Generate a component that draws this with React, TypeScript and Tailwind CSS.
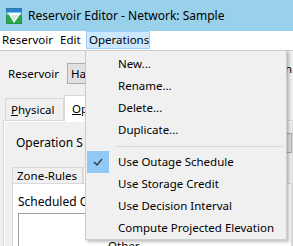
import React from "react";

function AppIcon() {
  return (
    <svg width="16" height="16" viewBox="0 0 16 16">
      <rect x="0" y="0" width="16" height="16" fill="#2aa84a" />
      <rect x="0" y="0" width="16" height="4" fill="#2f7fd8" />
      <rect x="0" y="4" width="16" height="3" fill="#6fc7e6" />
      <polygon points="2,5 15,5 8,15" fill="#ffffff" />
      <polygon points="5,7 12,7 8,13" fill="#cfe9d4" />
      <rect x="0" y="0" width="16" height="16" fill="none" stroke="#1d6b34" strokeWidth="0.6" />
    </svg>
  );
}

type Item = { label: string; checked?: boolean };

const groupA: Item[] = [
  { label: "New..." },
  { label: "Rename..." },
  { label: "Delete..." },
  { label: "Duplicate..." },
];
const groupB: Item[] = [
  { label: "Use Outage Schedule", checked: true },
  { label: "Use Storage Credit" },
  { label: "Use Decision Interval" },
  { label: "Compute Projected Elevation" },
];

function MenuRow({ item }: { item: Item }) {
  return (
    <div className="h-[22px] flex items-center">
      <div className="w-[26px] h-[22px] flex items-center pl-[1px]">
        {item.checked ? (
          <div className="w-[22px] h-[22px] bg-[#90c8f6] flex items-center justify-center">
            <svg width="10" height="8" viewBox="0 0 10 8">
              <polyline points="1,4 4,7 9,1" fill="none" stroke="#3b3b3b" strokeWidth="1.4" />
            </svg>
          </div>
        ) : null}
      </div>
      <span className="pl-[6px] whitespace-nowrap">{item.label}</span>
    </div>
  );
}

export default function App() {
  return (
    <div className="relative w-[293px] h-[246px] overflow-hidden bg-[#f0f0f0] font-['Noto_Sans',sans-serif] text-[11.5px] text-black leading-none">
      {/* Title bar */}
      <div className="h-[31px] bg-[#99d1ea] flex items-center pl-[6px] gap-[6px]">
        <AppIcon />
        <span className="text-[12px] whitespace-nowrap">Reservoir Editor - Network: Sample</span>
      </div>

      {/* Menu bar */}
      <div className="h-[20px] bg-white border-b border-[#c8c8c8] flex items-start">
        <div className="w-[55px] h-[18px] flex items-center pl-[2px]">Reservoir</div>
        <div className="w-[31px] h-[18px] flex items-center pl-[5px]">Edit</div>
        <div className="w-[64px] h-[18px] flex items-center pl-[2px] bg-[#cce8ff] border border-[#99d1ff]">Operations</div>
      </div>

      {/* Window body */}
      <div className="flex flex-col">
        <div className="mt-[12px] h-[21px] flex items-center">
          <span className="pl-[8px] w-[67px]">Reservoir</span>
          <div className="w-[200px] h-[21px] bg-[#e1e1e1] border border-[#adadad] flex items-center pl-[3px]">Ha</div>
          <span className="ml-auto pr-[1px] -mt-[10px]">n</span>
        </div>

        {/* Tabs */}
        <div className="mt-[11px] pl-[3px] flex items-end h-[25px]">
          <div className="ml-[2px] w-[59px] h-[22px] border border-b-0 border-[#d9d9d9] bg-[#f0f0f0] flex items-center pl-[5px]">
            <span><span className="underline">P</span>hysical</span>
          </div>
          <div className="w-[110px] h-[26px] -mb-[1px] border border-b-0 border-[#d9d9d9] bg-white flex items-center pl-[7px] relative z-10">
            <span><span className="underline">O</span>p</span>
          </div>
        </div>

        {/* Outer panel */}
        <div className="ml-[3px] h-[130px] border border-[#d9d9d9] bg-white pl-[1px] pt-[1px]">
          <div className="h-full bg-[#f0f0f0] flex flex-col">
            <div className="mt-[11px] h-[20px] flex items-center">
              <span className="pl-[11px] w-[140px] whitespace-nowrap text-[12px]">Operation S</span>
              <div className="w-[160px] h-[20px] bg-[#e1e1e1] border border-[#adadad]" />
            </div>

            {/* inner tabs */}
            <div className="mt-[14px] pl-[7px] flex items-end h-[16px]">
              <div className="w-[71px] h-[16px] border border-b-0 border-[#d9d9d9] bg-[#f0f0f0] flex items-center pl-[4px] whitespace-nowrap">Zone-Rules</div>
              <div className="w-[80px] h-[16px] border border-b-0 border-[#d9d9d9] bg-white" />
              <div className="w-[60px] h-[16px] border border-b-0 border-[#d9d9d9] bg-[#f0f0f0]" />
            </div>
            <div className="ml-[7px] flex-1 border border-[#d9d9d9] bg-white flex flex-col">
              <div className="mt-[12px] pl-[5px] whitespace-nowrap text-[12px]">Scheduled O</div>
              <div className="mt-[5px] ml-[5px] w-[230px] flex-1 border border-[#a0a0a0] border-r-white border-b-white bg-white pl-[89px] pt-[26px]">
                Other
              </div>
            </div>
          </div>
        </div>
      </div>

      {/* Dropdown menu */}
      <div className="absolute z-50 left-[85px] top-[50px] w-[202px] h-[190px] bg-[#f0f0f0] border border-[#cccccc] shadow-[2px_2px_3px_rgba(0,0,0,0.25)] pt-[2px]">
        {groupA.map((it) => (
          <MenuRow key={it.label} item={it} />
        ))}
        <div className="h-[10px] flex items-center pl-[29px] pr-[3px]">
          <div className="h-[1px] w-full bg-[#d7d7d7]" />
        </div>
        {groupB.map((it) => (
          <MenuRow key={it.label} item={it} />
        ))}
      </div>
    </div>
  );
}
